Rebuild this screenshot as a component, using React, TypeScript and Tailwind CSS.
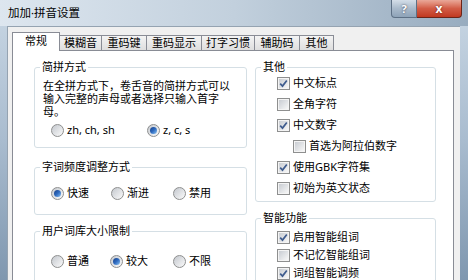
import React from "react";

function Radio({ on }: { on?: boolean }) {
    return (
        <span className="w-[13px] h-[13px] shrink-0 rounded-full border border-[#8e8f8f] bg-gradient-to-br from-[#c4c8ce] to-[#fbfbfb] flex items-center justify-center">
            {on && (
                <span className="w-[7px] h-[7px] rounded-full bg-gradient-to-br from-[#173f86] via-[#2f6bc0] to-[#8cc4f2]" />
            )}
        </span>
    );
}

function Check({ on }: { on?: boolean }) {
    return (
        <span className="w-[13px] h-[13px] shrink-0 border border-[#8e8f8f] bg-[#f4f4f4] p-px flex">
            <span className="flex-1 bg-gradient-to-br from-[#c9cdd3] to-[#f7f7f7] flex items-center justify-center">
                {on && (
                    <svg width="9" height="9" viewBox="0 0 9 9">
                        <path d="M1.2 4.6 L3.5 7.1 L7.8 1.4" fill="none" stroke="#3f5c8e" strokeWidth="1.7" />
                    </svg>
                )}
            </span>
        </span>
    );
}

function Group({ title, className, children }: { title: string; className?: string; children: React.ReactNode }) {
    return (
        <fieldset className={`border border-[#d5dfe5] rounded-[3px] ${className ?? ""}`}>
            <legend className="ml-[5px] px-[2px] leading-[14px]">{title}</legend>
            {children}
        </fieldset>
    );
}

function RadioItem({ label, on, w }: { label: string; on?: boolean; w?: string }) {
    return (
        <div className={`flex items-center gap-[3px] h-[14px] ${w ?? ""}`}>
            <Radio on={on} />
            <span className="leading-[14px]">{label}</span>
        </div>
    );
}

function CheckItem({ label, on, indent }: { label: string; on?: boolean; indent?: boolean }) {
    return (
        <div className={`flex items-center gap-[3px] h-[14px] ${indent ? "ml-[16px]" : ""}`}>
            <Check on={on} />
            <span className="leading-[14px]">{label}</span>
        </div>
    );
}

const tabs = [
    { label: "模糊音", w: "w-[42px]" },
    { label: "重码键", w: "w-[45px]" },
    { label: "重码显示", w: "w-[55px]" },
    { label: "打字习惯", w: "w-[53px]" },
    { label: "辅助码", w: "w-[45px]" },
    { label: "其他", w: "w-[34px]" },
];

export default function App() {
    return (
        <div className="w-[468px] h-[280px] overflow-hidden flex flex-col bg-gradient-to-b from-[#c9d7e4] via-[#a9bccf] to-[#7f97af] text-[11px] text-black font-['Noto_Sans','Noto_Sans_CJK_SC',sans-serif]">
            {/* Title bar */}
            <div className="h-[26px] shrink-0 flex items-start justify-between bg-gradient-to-r from-[#dde6ef] via-[#c2d0dd] to-[#98acbf]">
                <span className="pl-[8px] pt-[5px] text-[11.5px] leading-[16px]">加加·拼音设置</span>
                <div className="flex mr-[6px]">
                    <div className="w-[26px] h-[18px] border border-t-0 border-[#5d7085] rounded-bl-[4px] bg-gradient-to-b from-[#d4dee8] via-[#a9bacb] to-[#8ea3b8] flex items-center justify-center text-white font-bold text-[11px] leading-none [text-shadow:0_0_2px_#334]">
                        ?
                    </div>
                    <div className="w-[45px] h-[18px] border border-t-0 border-l-0 border-[#6b2418] rounded-br-[4px] bg-gradient-to-b from-[#e9a899] via-[#d25c46] to-[#c1381f] flex items-center justify-center text-white font-bold text-[12px] leading-none [text-shadow:0_0_2px_#511]">
                        x
                    </div>
                </div>
            </div>

            {/* Body */}
            <div className="flex-1 flex pl-[7px] pr-[8px]">
                <div className="flex-1 flex flex-col bg-[#f0f0f0] border-l border-t border-[#95a3b1] pl-[4px] pr-[6px] pt-[5px]">
                    {/* Tabs */}
                    <div className="flex items-end h-[18px]">
                        <div className="relative z-10 w-[48px] h-[19px] -mb-px bg-white border border-b-0 border-[#898c95] flex items-center justify-center leading-[14px] pb-[2px]">
                            常规
                        </div>
                        {tabs.map((t) => (
                            <div
                                key={t.label}
                                className={`${t.w} h-[15px] border-t border-r border-[#898c95] bg-gradient-to-b from-[#f4f4f4] to-[#dedede] flex items-center justify-center leading-[14px]`}
                            >
                                {t.label}
                            </div>
                        ))}
                    </div>

                    {/* Panel */}
                    <div className="flex-1 bg-white border border-b-0 border-[#898c95] flex gap-[8px] pl-[21px] pt-[9px]">
                        {/* Left column */}
                        <div className="w-[213px] flex flex-col">
                            <Group title="简拼方式">
                                <div className="pl-[8px] mt-[5px] flex flex-col">
                                    <span className="h-[13px] leading-[13px]">在全拼方式下，卷舌音的简拼方式可以</span>
                                    <span className="h-[13px] leading-[13px]">输入完整的声母或者选择只输入首字</span>
                                    <span className="h-[13px] leading-[13px]">母。</span>
                                </div>
                                <div className="flex pl-[16px] mt-[5px] pb-[10px]">
                                    <RadioItem label="zh, ch, sh" w="w-[96px]" />
                                    <RadioItem label="z, c, s" on />
                                </div>
                            </Group>

                            <Group title="字词频度调整方式" className="mt-[12px]">
                                <div className="flex pl-[16px] mt-[12px] pb-[14px]">
                                    <RadioItem label="快速" on w="w-[60px]" />
                                    <RadioItem label="渐进" w="w-[62px]" />
                                    <RadioItem label="禁用" />
                                </div>
                            </Group>

                            <Group title="用户词库大小限制" className="mt-[9px]">
                                <div className="flex pl-[16px] mt-[16px] pb-[14px]">
                                    <RadioItem label="普通" w="w-[59px]" />
                                    <RadioItem label="较大" on w="w-[63px]" />
                                    <RadioItem label="不限" />
                                </div>
                            </Group>
                        </div>

                        {/* Right column */}
                        <div className="w-[181px] flex flex-col">
                            <Group title="其他">
                                <div className="flex flex-col gap-[7px] pl-[21px] mt-[2px] pb-[6px]">
                                    <CheckItem label="中文标点" on />
                                    <CheckItem label="全角字符" />
                                    <CheckItem label="中文数字" on />
                                    <CheckItem label="首选为阿拉伯数字" indent />
                                    <CheckItem label="使用GBK字符集" on />
                                    <CheckItem label="初始为英文状态" />
                                </div>
                            </Group>

                            <Group title="智能功能" className="mt-[9px]">
                                <div className="flex flex-col gap-[4px] pl-[21px] mt-[5px] pb-[6px]">
                                    <CheckItem label="启用智能组词" on />
                                    <CheckItem label="不记忆智能组词" />
                                    <CheckItem label="词组智能调频" on />
                                </div>
                            </Group>
                        </div>
                    </div>
                </div>
            </div>
        </div>
    );
}
